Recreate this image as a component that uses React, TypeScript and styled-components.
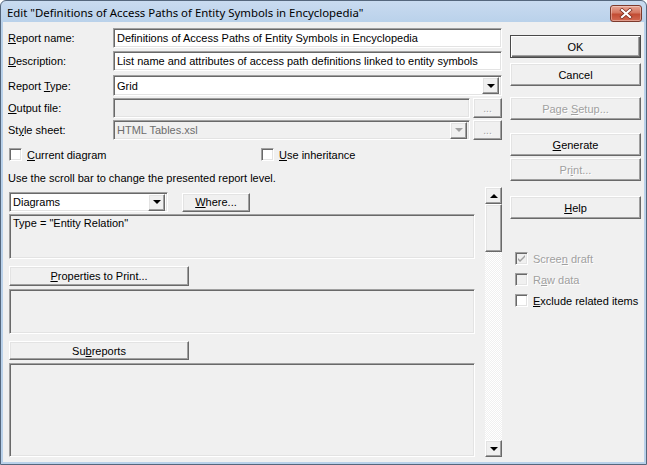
import React from 'react'
import styled, { createGlobalStyle, css } from 'styled-components'

const GlobalStyle = createGlobalStyle`
  html, body {
    margin: 0;
    padding: 0;
    background: #ffffff;
  }
  body {
    width: 647px;
    height: 465px;
    overflow: hidden;
  }
`

const sunken = css`
  box-sizing: border-box;
  border-top: 1px solid #a0a0a0;
  border-left: 1px solid #a0a0a0;
  border-right: 1px solid #ffffff;
  border-bottom: 1px solid #ffffff;
  box-shadow: inset 1px 1px 0 #696969, inset -1px -1px 0 #e3e3e3;
`

const raised = css`
  box-sizing: border-box;
  border-top: 1px solid #ffffff;
  border-left: 1px solid #ffffff;
  border-right: 1px solid #696969;
  border-bottom: 1px solid #696969;
  box-shadow: inset -1px -1px 0 #a0a0a0, inset 1px 1px 0 #e3e3e3;
  background: #f0f0f0;
`

const Window = styled.div`
  width: 647px;
  height: 465px;
  box-sizing: border-box;
  display: flex;
  flex-direction: column;
  border: 1px solid #55677d;
  border-radius: 6px 6px 0 0;
  padding: 0 2px 2px 2px;
  background: linear-gradient(#c9dbf0, #b9d1ea 22px);
  font-family: 'Liberation Sans', Arial, sans-serif;
  font-size: 11px;
  color: #000000;
  overflow: hidden;
`

const TitleBar = styled.div`
  height: 21px;
  display: flex;
  align-items: center;
  justify-content: space-between;
  padding: 0 2px 0 4px;
`

const TitleText = styled.span`
  font-family: 'Noto Sans', 'Open Sans', sans-serif;
  font-size: 11.4px;
  color: #000000;
  white-space: nowrap;
  margin-top: 1px;
`

const CloseButton = styled.div`
  width: 32px;
  height: 17px;
  box-sizing: border-box;
  margin-top: 4px;
  border: 1px solid #7d3a2c;
  border-radius: 3px;
  background: linear-gradient(#e8a595, #d47760 45%, #c24c33 55%, #d26a52);
  box-shadow: inset 0 0 0 1px rgba(255, 255, 255, 0.35);
  display: flex;
  align-items: center;
  justify-content: center;
`

const Body = styled.div`
  flex: 1;
  display: flex;
  background: #f0f0f0;
  padding: 6px 0 0 5px;
`

const LeftCol = styled.div`
  width: 494px;
  display: flex;
  flex-direction: column;
`

const RightCol = styled.div`
  width: 131px;
  margin-left: 8px;
  display: flex;
  flex-direction: column;
`

const FieldRow = styled.div<{ $top: number; $h?: number }>`
  display: flex;
  align-items: center;
  margin-top: ${(p) => p.$top}px;
  height: ${(p) => p.$h ?? 20}px;
`

const Label = styled.span`
  width: 105px;
  flex: none;
  white-space: nowrap;
`

const TextBox = styled.div<{ $disabled?: boolean }>`
  ${sunken};
  flex: 1;
  height: 100%;
  display: flex;
  align-items: center;
  padding: 0 3px;
  white-space: nowrap;
  overflow: hidden;
  background: ${(p) => (p.$disabled ? '#f0f0f0' : '#ffffff')};
  color: ${(p) => (p.$disabled ? '#6d6d6d' : '#000000')};
`

const ComboBox = styled(TextBox)<{ $width?: number }>`
  padding: 0 2px 0 3px;
  ${(p) => (p.$width ? `flex: none; width: ${p.$width}px;` : '')}
`

const ComboText = styled.span`
  flex: 1;
  overflow: hidden;
`

const DropButton = styled.div`
  ${raised};
  width: 17px;
  height: 17px;
  flex: none;
  display: flex;
  align-items: center;
  justify-content: center;
`

const Arrow = styled.span<{ $up?: boolean; $disabled?: boolean }>`
  width: 0;
  height: 0;
  border-left: 4px solid transparent;
  border-right: 4px solid transparent;
  ${(p) =>
    p.$up
      ? `border-bottom: 4px solid ${p.$disabled ? '#a0a0a0' : '#000'};`
      : `border-top: 4px solid ${p.$disabled ? '#a0a0a0' : '#000'};`}
`

const SmallButton = styled.div`
  ${raised};
  width: 29px;
  height: 100%;
  margin-left: 3px;
  flex: none;
  display: flex;
  align-items: center;
  justify-content: center;
  color: #a0a0a0;
  text-shadow: 1px 1px 0 #ffffff;
  font-size: 10px;
`

const CheckRow = styled.div<{ $top: number }>`
  display: flex;
  align-items: center;
  height: 13px;
  margin-top: ${(p) => p.$top}px;
`

const CheckItem = styled.label<{ $width?: number; $disabled?: boolean; $left?: number }>`
  display: flex;
  align-items: center;
  gap: 5px;
  margin-left: ${(p) => p.$left ?? 0}px;
  ${(p) => (p.$width ? `width: ${p.$width}px;` : '')}
  white-space: nowrap;
  color: ${(p) => (p.$disabled ? '#a0a0a0' : '#000000')};
  text-shadow: ${(p) => (p.$disabled ? '1px 1px 0 #ffffff' : 'none')};
`

const Box = styled.span<{ $disabled?: boolean }>`
  ${sunken};
  width: 13px;
  height: 13px;
  flex: none;
  display: flex;
  align-items: center;
  justify-content: center;
  background: ${(p) => (p.$disabled ? '#f0f0f0' : '#ffffff')};
`

const InfoText = styled.div`
  margin-top: 10px;
  height: 14px;
  line-height: 14px;
  white-space: nowrap;
`

const Lower = styled.div`
  display: flex;
  margin-top: 2px;
  height: 270px;
`

const ContentCol = styled.div`
  width: 466px;
  margin-left: 1px;
  padding-top: 5px;
  display: flex;
  flex-direction: column;
`

const Panel = styled.div<{ $top: number; $h: number }>`
  ${sunken};
  margin-top: ${(p) => p.$top}px;
  height: ${(p) => p.$h}px;
  padding: 1px 3px;
  line-height: 14px;
  white-space: nowrap;
`

const PushButton = styled.div<{ $top?: number; $w?: number; $h?: number; $left?: number; $disabled?: boolean; $default?: boolean }>`
  ${raised};
  margin-top: ${(p) => p.$top ?? 0}px;
  margin-left: ${(p) => p.$left ?? 0}px;
  ${(p) => (p.$w ? `width: ${p.$w}px; flex: none;` : '')}
  height: ${(p) => p.$h ?? 23}px;
  display: flex;
  align-items: center;
  justify-content: center;
  white-space: nowrap;
  color: ${(p) => (p.$disabled ? '#a0a0a0' : '#000000')};
  text-shadow: ${(p) => (p.$disabled ? '1px 1px 0 #ffffff' : 'none')};
  ${(p) =>
    p.$default &&
    css`
      border-color: #4a4a4a;
      box-shadow: inset 1px 1px 0 #ffffff, inset -1px -1px 0 #696969, inset -2px -2px 0 #a0a0a0;
    `}
`

const ScrollBar = styled.div`
  width: 17px;
  margin-left: 10px;
  display: flex;
  flex-direction: column;
`

const ScrollArrow = styled.div`
  ${raised};
  width: 17px;
  height: 17px;
  display: flex;
  align-items: center;
  justify-content: center;
`

const Thumb = styled.div`
  ${raised};
  height: 48px;
`

const Track = styled.div`
  flex: 1;
  background-color: #f0f0f0;
  background-image: repeating-conic-gradient(#ffffff 0 25%, #f0f0f0 0 50%);
  background-size: 2px 2px;
`

const RightChecks = styled.div`
  display: flex;
  flex-direction: column;
  gap: 8px;
  margin-top: 33px;
  padding-left: 5px;
`

const CheckMark = () => (
  <svg width="9" height="9" viewBox="0 0 9 9">
    <path d="M1 4 L3 6 L8 1 L8 3 L3 8 L1 6 Z" fill="#a0a0a0" />
  </svg>
)

const CloseIcon = () => (
  <svg width="14" height="11" viewBox="0 0 14 11">
    <path d="M3 2 L11 9 M11 2 L3 9" stroke="#7a2a1b" strokeWidth="3.6" strokeLinecap="square" />
    <path d="M3 2 L11 9 M11 2 L3 9" stroke="#ffffff" strokeWidth="2.2" strokeLinecap="square" />
  </svg>
)

const App = () => {
  return (
    <>
      <GlobalStyle />
      <Window>
        <TitleBar>
          <TitleText>Edit "Definitions of Access Paths of Entity Symbols in Encyclopedia"</TitleText>
          <CloseButton>
            <CloseIcon />
          </CloseButton>
        </TitleBar>
        <Body>
          <LeftCol>
            <FieldRow $top={0}>
              <Label>
                <u>R</u>eport name:
              </Label>
              <TextBox>Definitions of Access Paths of Entity Symbols in Encyclopedia</TextBox>
            </FieldRow>
            <FieldRow $top={3}>
              <Label>
                <u>D</u>escription:
              </Label>
              <TextBox>List name and attributes of access path definitions linked to entity symbols</TextBox>
            </FieldRow>
            <FieldRow $top={4} $h={21}>
              <Label>
                Report <u>T</u>ype:
              </Label>
              <ComboBox>
                <ComboText>Grid</ComboText>
                <DropButton>
                  <Arrow />
                </DropButton>
              </ComboBox>
            </FieldRow>
            <FieldRow $top={2}>
              <Label>
                <u>O</u>utput file:
              </Label>
              <TextBox $disabled />
              <SmallButton>...</SmallButton>
            </FieldRow>
            <FieldRow $top={2}>
              <Label>
                St<u>y</u>le sheet:
              </Label>
              <ComboBox $disabled>
                <ComboText>HTML Tables.xsl</ComboText>
                <DropButton>
                  <Arrow $disabled />
                </DropButton>
              </ComboBox>
              <SmallButton>...</SmallButton>
            </FieldRow>
            <CheckRow $top={8}>
              <CheckItem $width={252} $left={1}>
                <Box />
                <span>
                  <u>C</u>urrent diagram
                </span>
              </CheckItem>
              <CheckItem>
                <Box />
                <span>
                  <u>U</u>se inheritance
                </span>
              </CheckItem>
            </CheckRow>
            <InfoText>Use the scroll bar to change the presented report level.</InfoText>
            <Lower>
              <ContentCol>
                <FieldRow $top={0}>
                  <ComboBox $width={159}>
                    <ComboText>Diagrams</ComboText>
                    <DropButton>
                      <Arrow />
                    </DropButton>
                  </ComboBox>
                  <PushButton $w={68} $h={19} $left={14}>
                    <span>
                      <u>W</u>here...
                    </span>
                  </PushButton>
                </FieldRow>
                <Panel $top={2} $h={45}>
                  Type = "Entity Relation"
                </Panel>
                <PushButton $top={7} $w={180} $h={20}>
                  <span>
                    <u>P</u>roperties to Print...
                  </span>
                </PushButton>
                <Panel $top={3} $h={45} />
                <PushButton $top={7} $w={180} $h={19}>
                  <span>
                    Su<u>b</u>reports
                  </span>
                </PushButton>
                <Panel $top={3} $h={94} />
              </ContentCol>
              <ScrollBar>
                <ScrollArrow>
                  <Arrow $up />
                </ScrollArrow>
                <Thumb />
                <Track />
                <ScrollArrow>
                  <Arrow />
                </ScrollArrow>
              </ScrollBar>
            </Lower>
          </LeftCol>
          <RightCol>
            <PushButton $top={7} $default>
              OK
            </PushButton>
            <PushButton $top={5}>Cancel</PushButton>
            <PushButton $top={11} $disabled>
              <span>
                Page <u>S</u>etup...
              </span>
            </PushButton>
            <PushButton $top={13}>
              <span>
                <u>G</u>enerate
              </span>
            </PushButton>
            <PushButton $top={2} $disabled>
              <span>
                Pr<u>i</u>nt...
              </span>
            </PushButton>
            <PushButton $top={15}>
              <span>
                <u>H</u>elp
              </span>
            </PushButton>
            <RightChecks>
              <CheckItem $disabled>
                <Box $disabled>
                  <CheckMark />
                </Box>
                <span>
                  Scree<u>n</u> draft
                </span>
              </CheckItem>
              <CheckItem $disabled>
                <Box $disabled />
                <span>
                  R<u>a</u>w data
                </span>
              </CheckItem>
              <CheckItem>
                <Box />
                <span>
                  <u>E</u>xclude related items
                </span>
              </CheckItem>
            </RightChecks>
          </RightCol>
        </Body>
      </Window>
    </>
  )
}

export default App
